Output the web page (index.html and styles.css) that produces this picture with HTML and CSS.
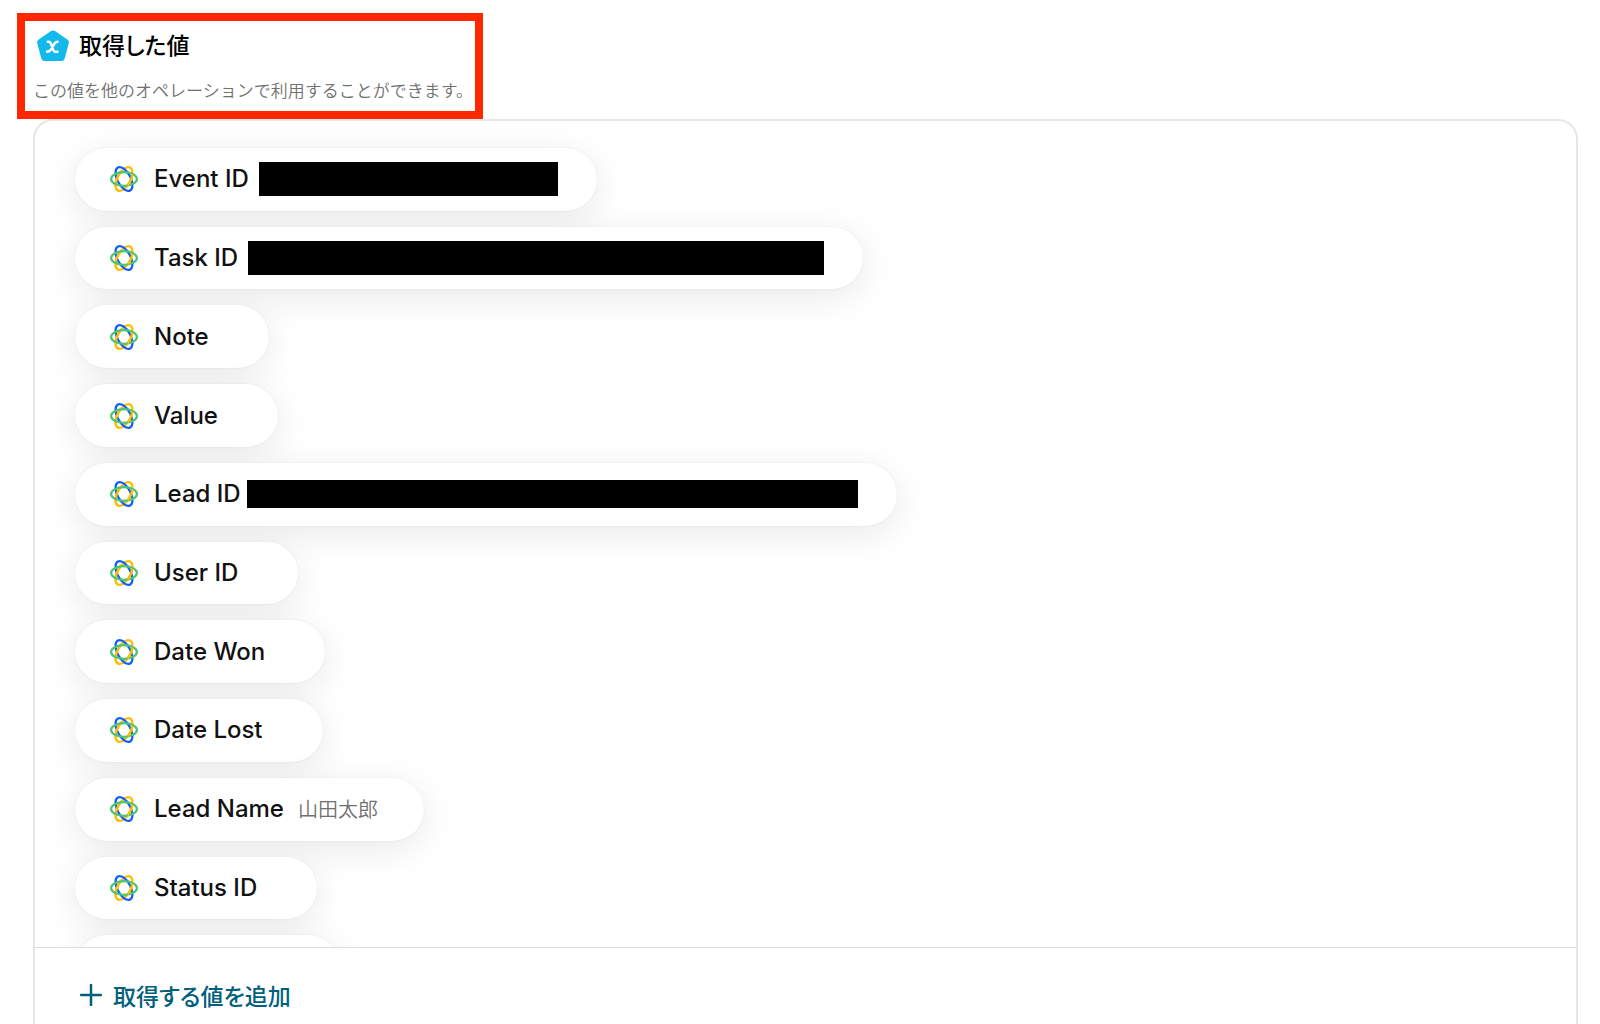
FILE: index.html
```html
<!DOCTYPE html>
<html lang="ja">
<head>
<meta charset="UTF-8">
<title>取得した値</title>
<link rel="stylesheet" href="styles.css">
</head>
<body>
<svg class="sprite" aria-hidden="true">
    <symbol id="close-icon" viewBox="0 0 28 28">
        <g fill="none" stroke-width="2.200">
            <ellipse cx="14" cy="14" rx="13" ry="6.600" stroke="#ffbc00" transform="rotate(-62 14 14)"/>
            <ellipse cx="14" cy="14" rx="13" ry="6.600" stroke="#0f5fff" transform="rotate(62 14 14)"/>
            <path d="M1 14 A13 6.600 0 0 1 18 7.700" stroke="#ffbc00" transform="rotate(-62 14 14)"/>
            <ellipse cx="14" cy="14" rx="12.900" ry="6.800" stroke="#4cc375"/>
            <path d="M10 20.300 A13 6.600 0 0 0 22 19.200" stroke="#ffbc00" transform="rotate(-62 14 14)"/>
        </g>
    </symbol>
</svg>
<main class="page">
    <header class="heading">
        <div class="title-row">
            <svg class="logo" viewBox="0 0 32 32" aria-hidden="true">
                <path d="M13.600 1.300 Q16 -.4 18.400 1.300 L30.300 9.400 Q32.500 11 31.700 13.500 L27.700 28.500 Q26.900 31 24.300 31 H7.700 Q5.100 31 4.300 28.500 L.3 13.500 Q-.5 11 1.700 9.400Z" fill="#13b9ea"/>
                <path d="M10.800 11.800 C13 11.300 13.800 12.800 14.300 14.500 L16 19.300 C16.800 21.800 18.500 22.300 20.400 21.600 M20.600 11.800 C18.800 11.600 18 12.600 17 14.400 L14 19.300 C12.800 21.300 11.800 21.900 10 21.600" fill="none" stroke="#fff" stroke-width="2.500" stroke-linecap="round"/>
            </svg>
            <h1>取得した値</h1>
        </div>
        <p>この値を他のオペレーションで利用することができます。</p>
    </header>
    <section class="panel">
        <div class="list-area">
            <ul class="value-list">
                <li class="pill masked"><svg class="icon"><use href="#close-icon"/></svg><span class="label">Event ID</span><span class="mask mask-event"></span></li>
                <li class="pill masked"><svg class="icon"><use href="#close-icon"/></svg><span class="label">Task ID</span><span class="mask mask-task"></span></li>
                <li class="pill"><svg class="icon"><use href="#close-icon"/></svg><span class="label">Note</span></li>
                <li class="pill"><svg class="icon"><use href="#close-icon"/></svg><span class="label">Value</span></li>
                <li class="pill masked"><svg class="icon"><use href="#close-icon"/></svg><span class="label">Lead ID</span><span class="mask mask-lead"></span></li>
                <li class="pill"><svg class="icon"><use href="#close-icon"/></svg><span class="label">User ID</span></li>
                <li class="pill"><svg class="icon"><use href="#close-icon"/></svg><span class="label">Date Won</span></li>
                <li class="pill"><svg class="icon"><use href="#close-icon"/></svg><span class="label">Date Lost</span></li>
                <li class="pill"><svg class="icon"><use href="#close-icon"/></svg><span class="label">Lead Name</span><span class="value">山田太郎</span></li>
                <li class="pill"><svg class="icon"><use href="#close-icon"/></svg><span class="label">Status ID</span></li>
                <li class="pill pill-empty"></li>
            </ul>
        </div>
        <div class="panel-footer">
            <button type="button" class="add-button">
                <svg class="plus" viewBox="0 0 22 22" aria-hidden="true"><path d="M11 1V21M1 11H21" stroke="currentColor" stroke-width="2.500" stroke-linecap="round"/></svg>
                取得する値を追加
            </button>
        </div>
    </section>
</main>
</body>
</html>
```
FILE: styles.css
```css
* {
    box-sizing: border-box;
}
body {
    margin: 0;
    height: 100vh;
    overflow: hidden;
    background: #fff;
    color: #111;
    font-family: Inter, "Noto Sans CJK JP", sans-serif;
}
.sprite {
    display: none;
}
.page {
    padding: 13px 22px 0 17px;
}

/* heading with the red frame */
.heading {
    width: fit-content;
    height: 106px;
    padding: 9px 2px 0 8px;
    border: 8px solid #ff2600;
    font-family: "Noto Sans CJK JP", sans-serif;
}
.title-row {
    display: flex;
    align-items: flex-start;
    gap: 10px;
    padding-left: 4px;
}
.logo {
    width: 32px;
    height: 32px;
}
h1 {
    margin: 0;
    font-size: 23px;
    line-height: 28px;
    font-weight: 500;
    font-feature-settings: "palt";
    color: #000;
}
.heading p {
    margin: 15px 0 0;
    font-size: 17px;
    line-height: 26px;
    font-weight: 350;
    color: #707070;
}

.panel {
    margin-left: 16px;
    border: 2px solid #e6e6e6;
    border-radius: 20px;
}
.list-area {
    height: 826px;
    overflow: hidden;
    padding: 27px 40px 0;
}
.value-list {
    display: grid;
    grid-template-rows: repeat(11, 1fr);
    justify-items: start;
    gap: 16px;
    height: 850px;
    margin: 0;
    padding: 0;
    list-style: none;
}
.pill {
    display: flex;
    align-items: center;
    padding: 0 60px 0 35px;
    border-radius: 32px;
    background: #fff;
    box-shadow: 0 0 2px rgba(0, 0, 0, 0.08), 0 8px 36px rgba(0, 0, 0, 0.09);
}
.pill:has(.value) {
    padding-right: 46px;
}
.pill.masked {
    padding-right: 39px;
}
.pill-empty {
    width: 265px;
}
.icon {
    width: 28px;
    height: 28px;
    margin-right: 16px;
}
.label {
    font-size: 24px;
    font-weight: 500;
    line-height: 30px;
    white-space: nowrap;
}
.value {
    margin-left: 14px;
    font-family: "Noto Sans CJK JP", sans-serif;
    font-size: 20px;
    font-weight: 350;
    line-height: 30px;
    color: #707070;
}
.mask {
    height: 34px;
    margin-left: 10px;
    background: #000;
}
.mask-event {
    width: 299px;
}
.mask-task {
    width: 576px;
}
.mask-lead {
    width: 611px;
    height: 28px;
    margin-left: 6px;
}

.panel-footer {
    padding: 27px 45px 40px;
    border-top: 1px solid #dcdcdc;
}
.add-button {
    display: flex;
    align-items: center;
    gap: 11px;
    padding: 0;
    border: 0;
    background: none;
    color: #00607c;
    font-family: "Noto Sans CJK JP", sans-serif;
    font-feature-settings: "palt";
    font-size: 23px;
    line-height: 40px;
    font-weight: 500;
    cursor: pointer;
}
.plus {
    width: 22px;
    height: 22px;
}
```
